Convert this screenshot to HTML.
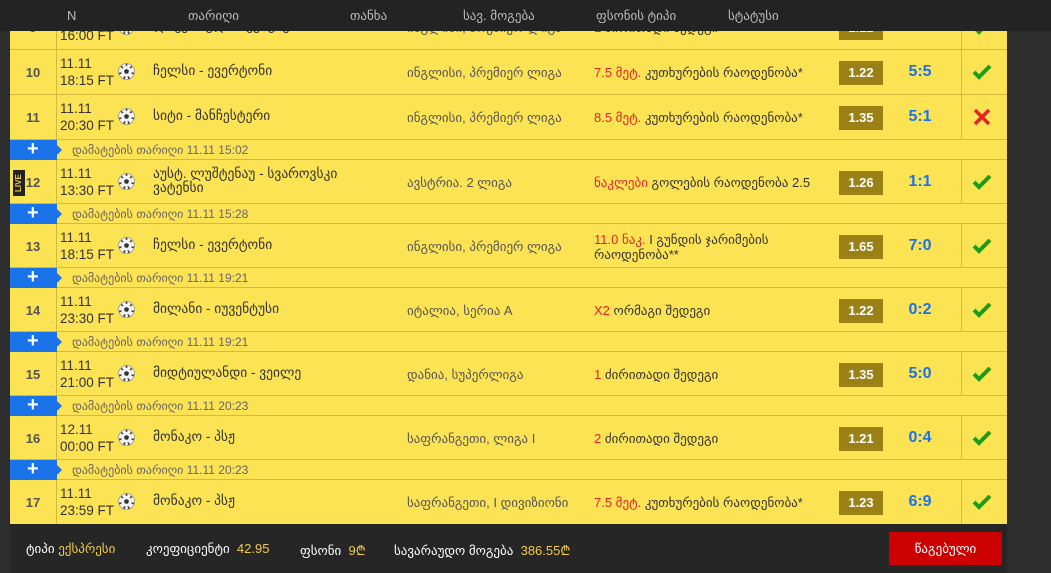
<!DOCTYPE html><html><head><meta charset="utf-8"><style>
*{margin:0;padding:0;box-sizing:border-box}
body{width:1051px;height:573px;background:#2d2d2d;overflow:hidden;position:relative;font-family:"Liberation Sans","DejaVu Sans",sans-serif;font-size:13px;color:#333}
.y{position:absolute;left:10px;width:997px;background:#fce354}
.r{position:absolute;left:10px;width:997px;height:45px;border-bottom:1px solid #d6b83f}
.r>div{position:absolute}
.n{left:0;width:46px;text-align:center;font-weight:bold;color:#555;top:15px}
.vl{left:46px;top:0;bottom:0;width:1px;background:#d6b83f}
.vl2{left:951px;top:0;bottom:0;width:1px;background:#d6b83f}
.d{left:50px;top:5px;line-height:17px;font-size:13.5px;color:#333}
.ball{left:108px;top:13px;width:17px;height:17px}
.m{left:143px;top:14px;font-size:13.5px;line-height:14px}
.l{left:397px;top:15px;color:#555}
.b{left:584px;top:15px;line-height:15px}
.b i{font-style:normal;color:#e3242b}
.o{left:829px;top:11px;width:44px;height:24px;background:#9b8016;color:#fff;font-weight:bold;text-align:center;line-height:24px;font-size:13px}
.s{left:890px;width:40px;text-align:center;top:13px;color:#1a73e8;font-weight:bold;font-size:16px}
.st{left:962px;top:13px;width:20px;height:18px}
.bar{position:absolute;left:10px;width:997px;height:20px;border-bottom:1px solid #d6b83f}
.bar .p{position:absolute;left:0;top:0;width:47px;height:20px;background:#1a73e8;color:#fff;font-weight:bold;font-size:20px;line-height:19px;padding-left:17px}
.bar .p:after{content:"";position:absolute;right:-5px;top:5px;border-left:5px solid #1a73e8;border-top:5px solid transparent;border-bottom:5px solid transparent}
.bar span{position:absolute;left:62px;top:3px;font-size:12px;color:#666}
.hd{position:absolute;left:0;top:0;width:1051px;height:31px;background:#232323;color:#bbb;font-size:13px}
.hd span{position:absolute;top:8px}
.ft{position:absolute;left:10px;top:524px;width:997px;height:49px;background:#262626;color:#fff;font-size:13px}
.ft span{position:absolute;top:17px}
.g{color:#f2c94c}
</style></head><body>
<svg width="0" height="0" style="position:absolute"><defs>
<symbol id="ball" viewBox="0 0 16 16"><circle cx="8" cy="8" r="7.5" fill="#f4f4f4" stroke="#888" stroke-width=".6"/><path d="M8 5.5l2.4 1.7-.9 2.8h-3l-.9-2.8z" fill="#333"/><path d="M8 .5v2.2M3 3.2l1.6 1.5M13 3.2l-1.6 1.5M1 10l2.2-.6M15 10l-2.2-.6M5.5 15l1-2.4M10.5 15l-1-2.4" stroke="#444" stroke-width="1.6"/></symbol>
<symbol id="ok" viewBox="0 0 20 18"><path d="M2 9l5 5L18 3" fill="none" stroke="#1a9e1a" stroke-width="4"/></symbol>
<symbol id="no" viewBox="0 0 20 18"><path d="M3 2l14 14M17 2L3 16" fill="none" stroke="#e3242b" stroke-width="3.5"/></symbol>
</defs></svg>
<div class="y" style="top:0;height:524px"></div>

<div class="r" style="top:5px"><div class="vl"></div><div class="vl2"></div><div class="n">9</div><div class="d">11.11<br>16:00 FT</div><svg class="ball" style="position:absolute"><use href="#ball"/></svg><div class="m">ლივერპული - ვესტჰემი</div><div class="l">ინგლისი, პრემიერ ლიგა</div><div class="b"><i>1</i> ძირითადი შედეგი</div><div class="o">1.12</div><div class="s">2:0</div><svg class="st" style="position:absolute"><use href="#ok"/></svg></div>

<div class="r" style="top:50px"><div class="vl"></div><div class="vl2"></div><div class="n">10</div><div class="d">11.11<br>18:15 FT</div><svg class="ball" style="position:absolute"><use href="#ball"/></svg><div class="m">ჩელსი - ევერტონი</div><div class="l">ინგლისი, პრემიერ ლიგა</div><div class="b"><i>7.5 მეტ.</i> კუთხურების რაოდენობა*</div><div class="o">1.22</div><div class="s">5:5</div><svg class="st" style="position:absolute"><use href="#ok"/></svg></div>

<div class="r" style="top:95px"><div class="vl"></div><div class="vl2"></div><div class="n">11</div><div class="d">11.11<br>20:30 FT</div><svg class="ball" style="position:absolute"><use href="#ball"/></svg><div class="m">სიტი - მანჩესტერი</div><div class="l">ინგლისი, პრემიერ ლიგა</div><div class="b"><i>8.5 მეტ.</i> კუთხურების რაოდენობა*</div><div class="o">1.35</div><div class="s">5:1</div><svg class="st" style="position:absolute"><use href="#no"/></svg></div>

<div class="bar" style="top:140px"><div class="p">+</div><span>დამატების თარიღი 11.11 15:02</span></div>
<div class="r" style="top:160px;height:44px"><div class="vl"></div><div class="vl2"></div><div style="left:3px;top:10px;width:12px;height:26px;background:#222;color:#f2c94c;font-size:8px;font-weight:bold;writing-mode:vertical-rl;transform:rotate(180deg);text-align:center;line-height:12px">LIVE</div><div class="n">12</div><div class="d">11.11<br>13:30 FT</div><svg class="ball" style="position:absolute"><use href="#ball"/></svg><div class="m" style="top:7px">აუსტ. ლუშტენაუ - სვაროვსკი<br>ვატენსი</div><div class="l">ავსტრია. 2 ლიგა</div><div class="b"><i>ნაკლები</i> გოლების რაოდენობა 2.5</div><div class="o">1.26</div><div class="s">1:1</div><svg class="st" style="position:absolute"><use href="#ok"/></svg></div>

<div class="bar" style="top:204px"><div class="p">+</div><span>დამატების თარიღი 11.11 15:28</span></div>
<div class="r" style="top:224px;height:44px"><div class="vl"></div><div class="vl2"></div><div class="n">13</div><div class="d">11.11<br>18:15 FT</div><svg class="ball" style="position:absolute"><use href="#ball"/></svg><div class="m">ჩელსი - ევერტონი</div><div class="l">ინგლისი, პრემიერ ლიგა</div><div class="b" style="top:8px"><i>11.0 ნაკ.</i> I გუნდის ჯარიმების<br>რაოდენობა**</div><div class="o">1.65</div><div class="s">7:0</div><svg class="st" style="position:absolute"><use href="#ok"/></svg></div>

<div class="bar" style="top:268px"><div class="p">+</div><span>დამატების თარიღი 11.11 19:21</span></div>
<div class="r" style="top:288px;height:44px"><div class="vl"></div><div class="vl2"></div><div class="n">14</div><div class="d">11.11<br>23:30 FT</div><svg class="ball" style="position:absolute"><use href="#ball"/></svg><div class="m">მილანი - იუვენტუსი</div><div class="l">იტალია, სერია A</div><div class="b"><i>X2</i> ორმაგი შედეგი</div><div class="o">1.22</div><div class="s">0:2</div><svg class="st" style="position:absolute"><use href="#ok"/></svg></div>

<div class="bar" style="top:332px"><div class="p">+</div><span>დამატების თარიღი 11.11 19:21</span></div>
<div class="r" style="top:352px;height:44px"><div class="vl"></div><div class="vl2"></div><div class="n">15</div><div class="d">11.11<br>21:00 FT</div><svg class="ball" style="position:absolute"><use href="#ball"/></svg><div class="m">მიდტიულანდი - ვეილე</div><div class="l">დანია, სუპერლიგა</div><div class="b"><i>1</i> ძირითადი შედეგი</div><div class="o">1.35</div><div class="s">5:0</div><svg class="st" style="position:absolute"><use href="#ok"/></svg></div>

<div class="bar" style="top:396px"><div class="p">+</div><span>დამატების თარიღი 11.11 20:23</span></div>
<div class="r" style="top:416px;height:44px"><div class="vl"></div><div class="vl2"></div><div class="n">16</div><div class="d">12.11<br>00:00 FT</div><svg class="ball" style="position:absolute"><use href="#ball"/></svg><div class="m">მონაკო - პსჟ</div><div class="l">საფრანგეთი, ლიგა I</div><div class="b"><i>2</i> ძირითადი შედეგი</div><div class="o">1.21</div><div class="s">0:4</div><svg class="st" style="position:absolute"><use href="#ok"/></svg></div>

<div class="bar" style="top:460px"><div class="p">+</div><span>დამატების თარიღი 11.11 20:23</span></div>
<div class="r" style="top:480px;height:44px;border-bottom:none"><div class="vl"></div><div class="vl2"></div><div class="n">17</div><div class="d">11.11<br>23:59 FT</div><svg class="ball" style="position:absolute"><use href="#ball"/></svg><div class="m">მონაკო - პსჟ</div><div class="l">საფრანგეთი, I დივიზიონი</div><div class="b"><i>7.5 მეტ.</i> კუთხურების რაოდენობა*</div><div class="o">1.23</div><div class="s">6:9</div><svg class="st" style="position:absolute"><use href="#ok"/></svg></div>

<div class="hd"><span style="left:67px">N</span><span style="left:188px">თარიღი</span><span style="left:350px">თანხა</span><span style="left:463px">სავ. მოგება</span><span style="left:596px">ფსონის ტიპი</span><span style="left:728px">სტატუსი</span></div>

<div class="ft"><span style="left:16px">ტიპი <b class="g" style="font-weight:normal">ექსპრესი</b></span><span style="left:136px">კოეფიციენტი <b class="g" style="font-weight:normal">&nbsp;42.95</b></span><span style="left:290px">ფსონი <b class="g" style="font-weight:normal">&nbsp;9₾</b></span><span style="left:384px">სავარაუდო მოგება <b class="g" style="font-weight:normal">&nbsp;386.55₾</b></span>
<div style="position:absolute;left:879px;top:8px;width:113px;height:33px;background:#cc0000;color:#fff;text-align:center;line-height:33px">წაგებული</div></div>
</body></html>
